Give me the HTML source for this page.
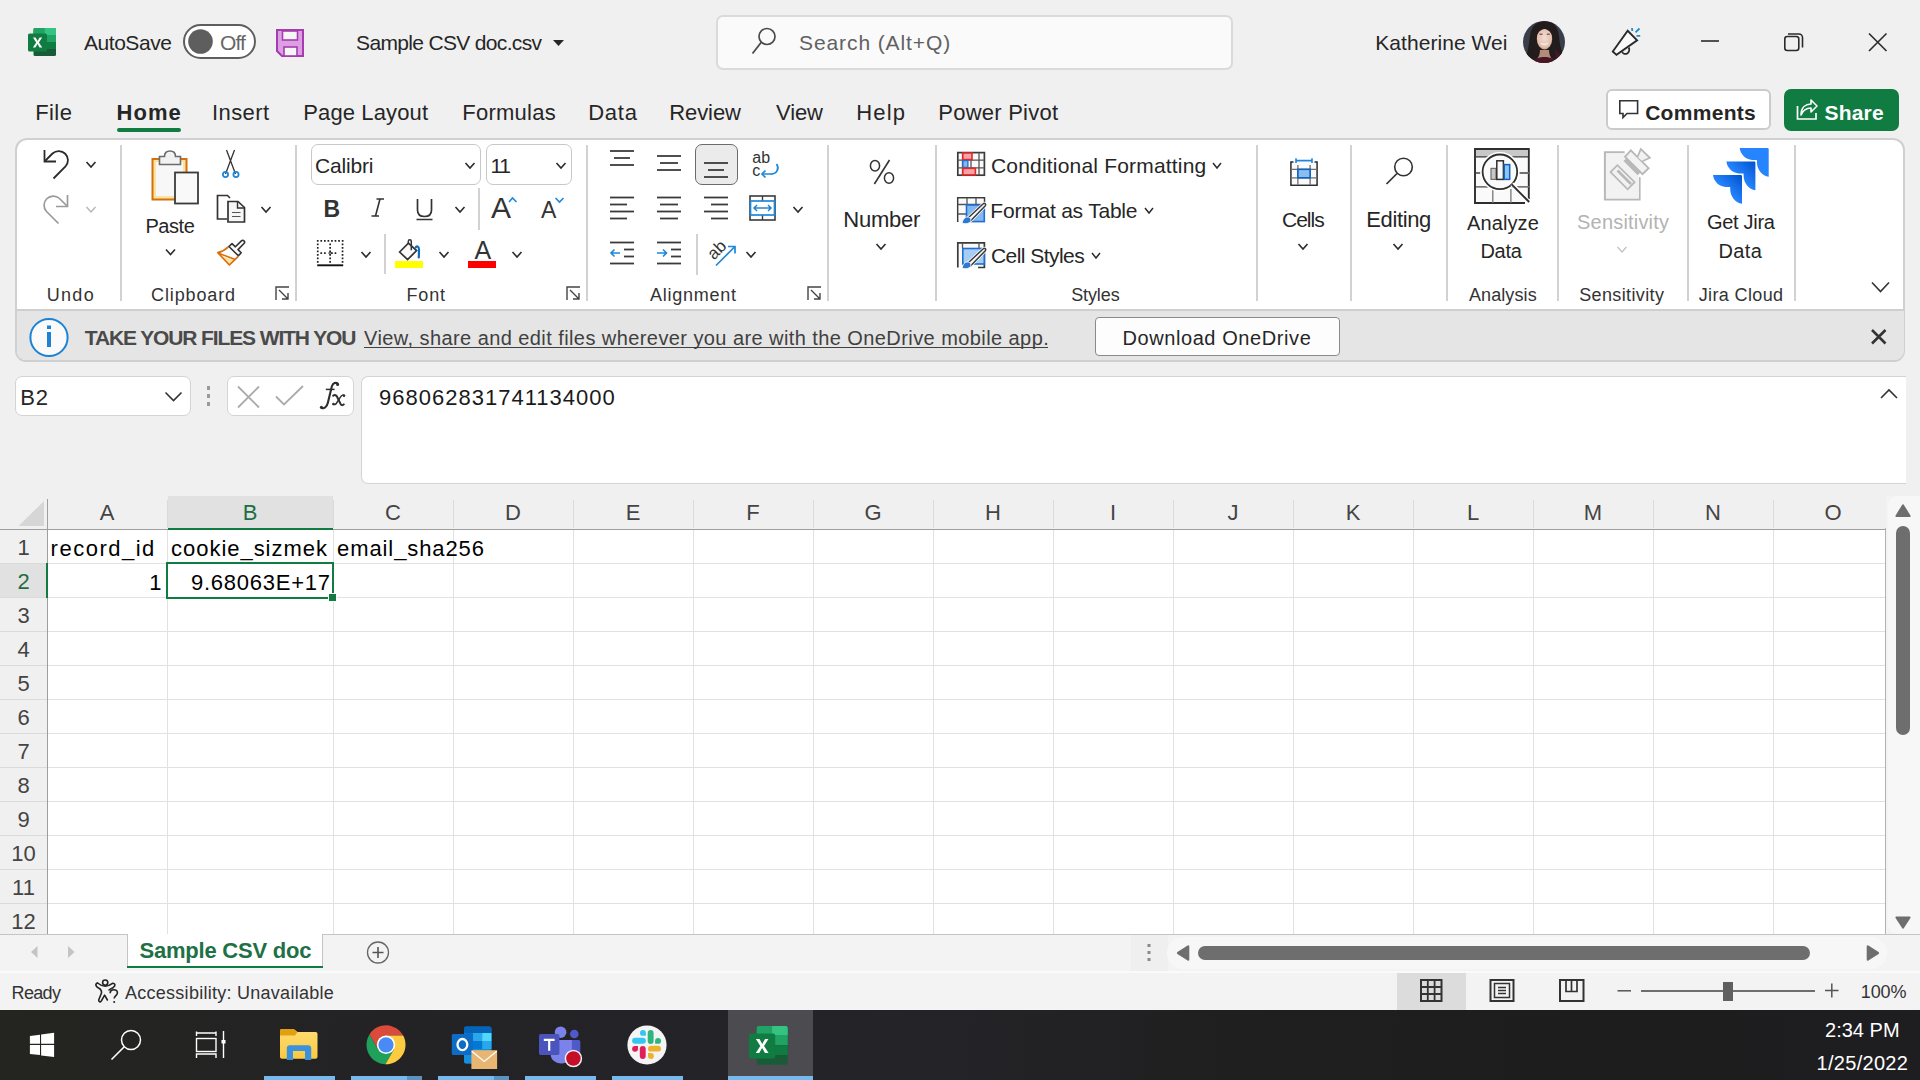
<!DOCTYPE html>
<html><head><meta charset="utf-8"><style>
html,body{margin:0;padding:0;width:1920px;height:1080px;overflow:hidden;background:#f0f0f0;font-family:"Liberation Sans",sans-serif;}
.r{position:absolute;}
.t{position:absolute;white-space:nowrap;line-height:1;}
svg.ov{position:absolute;left:0;top:0;}
</style></head><body>
<div class="r" style="left:15px;top:138px;width:1890px;height:224px;background:#fff;border:2px solid #d0d0d0;border-bottom:2px solid #cfcfcf;border-radius:12px 12px 11px 11px;box-sizing:border-box;"></div>
<div class="r" style="left:16.5px;top:309px;width:1887px;height:51px;background:#e5e5e5;border-top:2px solid #cfcfcf;border-radius:0 0 9px 9px;box-sizing:border-box;"></div>
<div class="r" style="left:15px;top:376px;width:176px;height:40px;background:#fff;border:1px solid #d4d4d4;border-radius:7px;box-sizing:border-box;"></div>
<div class="r" style="left:227px;top:376px;width:127px;height:40px;background:#fff;border:1px solid #d4d4d4;border-radius:7px;box-sizing:border-box;"></div>
<div class="r" style="left:361px;top:376px;width:1545px;height:108px;background:#fff;border:1px solid #d4d4d4;border-radius:7px 0 0 7px;border-right:none;box-sizing:border-box;"></div>
<div class="r" style="left:47px;top:529px;width:1838px;height:405px;background:#fff;"></div>
<div class="r" style="left:168px;top:496px;width:165px;height:33px;background:#e1e1e1;"></div>
<div class="r" style="left:0px;top:564px;width:47px;height:33px;background:#e1e1e1;"></div>
<div class="r" style="left:167px;top:529px;width:1px;height:405px;background:#e1e1e1;"></div>
<div class="r" style="left:333px;top:529px;width:1px;height:405px;background:#e1e1e1;"></div>
<div class="r" style="left:453px;top:529px;width:1px;height:405px;background:#e1e1e1;"></div>
<div class="r" style="left:573px;top:529px;width:1px;height:405px;background:#e1e1e1;"></div>
<div class="r" style="left:693px;top:529px;width:1px;height:405px;background:#e1e1e1;"></div>
<div class="r" style="left:813px;top:529px;width:1px;height:405px;background:#e1e1e1;"></div>
<div class="r" style="left:933px;top:529px;width:1px;height:405px;background:#e1e1e1;"></div>
<div class="r" style="left:1053px;top:529px;width:1px;height:405px;background:#e1e1e1;"></div>
<div class="r" style="left:1173px;top:529px;width:1px;height:405px;background:#e1e1e1;"></div>
<div class="r" style="left:1293px;top:529px;width:1px;height:405px;background:#e1e1e1;"></div>
<div class="r" style="left:1413px;top:529px;width:1px;height:405px;background:#e1e1e1;"></div>
<div class="r" style="left:1533px;top:529px;width:1px;height:405px;background:#e1e1e1;"></div>
<div class="r" style="left:1653px;top:529px;width:1px;height:405px;background:#e1e1e1;"></div>
<div class="r" style="left:1773px;top:529px;width:1px;height:405px;background:#e1e1e1;"></div>
<div class="r" style="left:47px;top:563px;width:1838px;height:1px;background:#e1e1e1;"></div>
<div class="r" style="left:47px;top:597px;width:1838px;height:1px;background:#e1e1e1;"></div>
<div class="r" style="left:47px;top:631px;width:1838px;height:1px;background:#e1e1e1;"></div>
<div class="r" style="left:47px;top:665px;width:1838px;height:1px;background:#e1e1e1;"></div>
<div class="r" style="left:47px;top:699px;width:1838px;height:1px;background:#e1e1e1;"></div>
<div class="r" style="left:47px;top:733px;width:1838px;height:1px;background:#e1e1e1;"></div>
<div class="r" style="left:47px;top:767px;width:1838px;height:1px;background:#e1e1e1;"></div>
<div class="r" style="left:47px;top:801px;width:1838px;height:1px;background:#e1e1e1;"></div>
<div class="r" style="left:47px;top:835px;width:1838px;height:1px;background:#e1e1e1;"></div>
<div class="r" style="left:47px;top:869px;width:1838px;height:1px;background:#e1e1e1;"></div>
<div class="r" style="left:47px;top:903px;width:1838px;height:1px;background:#e1e1e1;"></div>
<div class="r" style="left:47px;top:937px;width:1838px;height:1px;background:#e1e1e1;"></div>
<div class="r" style="left:167px;top:500px;width:1px;height:28px;background:#dadada;"></div>
<div class="r" style="left:333px;top:500px;width:1px;height:28px;background:#dadada;"></div>
<div class="r" style="left:453px;top:500px;width:1px;height:28px;background:#dadada;"></div>
<div class="r" style="left:573px;top:500px;width:1px;height:28px;background:#dadada;"></div>
<div class="r" style="left:693px;top:500px;width:1px;height:28px;background:#dadada;"></div>
<div class="r" style="left:813px;top:500px;width:1px;height:28px;background:#dadada;"></div>
<div class="r" style="left:933px;top:500px;width:1px;height:28px;background:#dadada;"></div>
<div class="r" style="left:1053px;top:500px;width:1px;height:28px;background:#dadada;"></div>
<div class="r" style="left:1173px;top:500px;width:1px;height:28px;background:#dadada;"></div>
<div class="r" style="left:1293px;top:500px;width:1px;height:28px;background:#dadada;"></div>
<div class="r" style="left:1413px;top:500px;width:1px;height:28px;background:#dadada;"></div>
<div class="r" style="left:1533px;top:500px;width:1px;height:28px;background:#dadada;"></div>
<div class="r" style="left:1653px;top:500px;width:1px;height:28px;background:#dadada;"></div>
<div class="r" style="left:1773px;top:500px;width:1px;height:28px;background:#dadada;"></div>
<div class="r" style="left:0px;top:563px;width:47px;height:1px;background:#dadada;"></div>
<div class="r" style="left:0px;top:597px;width:47px;height:1px;background:#dadada;"></div>
<div class="r" style="left:0px;top:631px;width:47px;height:1px;background:#dadada;"></div>
<div class="r" style="left:0px;top:665px;width:47px;height:1px;background:#dadada;"></div>
<div class="r" style="left:0px;top:699px;width:47px;height:1px;background:#dadada;"></div>
<div class="r" style="left:0px;top:733px;width:47px;height:1px;background:#dadada;"></div>
<div class="r" style="left:0px;top:767px;width:47px;height:1px;background:#dadada;"></div>
<div class="r" style="left:0px;top:801px;width:47px;height:1px;background:#dadada;"></div>
<div class="r" style="left:0px;top:835px;width:47px;height:1px;background:#dadada;"></div>
<div class="r" style="left:0px;top:869px;width:47px;height:1px;background:#dadada;"></div>
<div class="r" style="left:0px;top:903px;width:47px;height:1px;background:#dadada;"></div>
<div class="r" style="left:0px;top:937px;width:47px;height:1px;background:#dadada;"></div>
<div class="r" style="left:0px;top:529px;width:1886px;height:1px;background:#9e9e9e;"></div>
<div class="r" style="left:47px;top:499px;width:1px;height:435px;background:#9e9e9e;"></div>
<div class="r" style="left:1885px;top:528px;width:1px;height:406px;background:#b0b0b0;"></div>
<div class="r" style="left:0px;top:0px;width:0px;height:0px;"></div>
<div class="r" style="left:168px;top:528px;width:165px;height:2px;background:#107c41;"></div>
<div class="r" style="left:46px;top:563px;width:2px;height:35px;background:#107c41;"></div>
<div class="r" style="left:166px;top:562px;width:168px;height:37px;border:2px solid #107c41;box-sizing:border-box;"></div>
<div class="r" style="left:328px;top:593px;width:7px;height:7px;background:#107c41;border:1px solid #fff;"></div>
<div class="r" style="left:1886px;top:496px;width:34px;height:438px;background:#f3f3f3;"></div>
<div class="r" style="left:1888px;top:496px;width:32px;height:438px;background:#f7f7f7;border-radius:10px 0 0 10px;"></div>
<div class="r" style="left:1896px;top:526px;width:14px;height:209px;background:#6e6e6e;border-radius:7px;"></div>
<div class="r" style="left:0px;top:934px;width:1920px;height:1px;background:#c4c4c4;"></div>
<div class="r" style="left:0px;top:935px;width:1920px;height:36px;background:#f3f3f3;"></div>
<div class="r" style="left:1131px;top:935px;width:37px;height:36px;background:#efefef;"></div>
<div class="r" style="left:1167px;top:937px;width:720px;height:32px;background:#f7f7f7;border-radius:16px;"></div>
<div class="r" style="left:1198px;top:946px;width:612px;height:14px;background:#6e6e6e;border-radius:7px;"></div>
<div class="r" style="left:127px;top:934px;width:196px;height:33px;background:#ffffff;border-left:1px solid #c4c4c4;border-right:1px solid #c4c4c4;box-sizing:border-box;"></div>
<div class="r" style="left:127px;top:966px;width:196px;height:2px;background:#107c41;"></div>
<div class="r" style="left:0px;top:971px;width:1920px;height:2px;background:#fafafa;"></div>
<div class="r" style="left:0px;top:973px;width:1920px;height:37px;background:#f3f3f3;"></div>
<div class="r" style="left:1397px;top:973px;width:69px;height:37px;background:#dcdcdc;"></div>
<div class="r" style="left:0px;top:1010px;width:1920px;height:70px;background:linear-gradient(90deg,#242420 0px,#232326 400px,#242328 900px,#201f1f 1250px,#1d1d1d 1600px,#1e1d20 1920px);"></div>
<div class="r" style="left:728px;top:1010px;width:85px;height:70px;background:#4c4b4f;"></div>
<div class="r" style="left:264px;top:1076px;width:71px;height:4px;background:#76b9ed;"></div>
<div class="r" style="left:351px;top:1076px;width:71px;height:4px;background:#76b9ed;"></div>
<div class="r" style="left:438px;top:1076px;width:71px;height:4px;background:#76b9ed;"></div>
<div class="r" style="left:525px;top:1076px;width:71px;height:4px;background:#76b9ed;"></div>
<div class="r" style="left:612px;top:1076px;width:71px;height:4px;background:#76b9ed;"></div>
<div class="r" style="left:728px;top:1076px;width:85px;height:4px;background:#76b9ed;"></div>
<div class="r" style="left:407px;top:1076px;width:15px;height:4px;background:#5b93c0;"></div>
<div class="r" style="left:494px;top:1076px;width:15px;height:4px;background:#5b93c0;"></div>
<div class="r" style="left:716px;top:15px;width:517px;height:55px;background:#fafafa;border:2px solid #dadada;border-radius:7px;box-sizing:border-box;"></div>
<div class="r" style="left:117px;top:128px;width:64px;height:4px;background:#107c41;border-radius:2px;"></div>
<div class="r" style="left:1606px;top:89px;width:165px;height:41px;background:#fff;border:2px solid #cbcbcb;border-radius:6px;box-sizing:border-box;"></div>
<div class="r" style="left:1784px;top:89px;width:115px;height:42px;background:#107c41;border-radius:7px;"></div>
<div class="r" style="left:120px;top:145px;width:1.6px;height:156px;background:#d2d2d2;"></div>
<div class="r" style="left:295px;top:145px;width:1.6px;height:156px;background:#d2d2d2;"></div>
<div class="r" style="left:586px;top:145px;width:1.6px;height:156px;background:#d2d2d2;"></div>
<div class="r" style="left:827px;top:145px;width:1.6px;height:156px;background:#d2d2d2;"></div>
<div class="r" style="left:935px;top:145px;width:1.6px;height:156px;background:#d2d2d2;"></div>
<div class="r" style="left:1256px;top:145px;width:1.6px;height:156px;background:#d2d2d2;"></div>
<div class="r" style="left:1350px;top:145px;width:1.6px;height:156px;background:#d2d2d2;"></div>
<div class="r" style="left:1446px;top:145px;width:1.6px;height:156px;background:#d2d2d2;"></div>
<div class="r" style="left:1557px;top:145px;width:1.6px;height:156px;background:#d2d2d2;"></div>
<div class="r" style="left:1687px;top:145px;width:1.6px;height:156px;background:#d2d2d2;"></div>
<div class="r" style="left:1794px;top:145px;width:1.6px;height:156px;background:#d2d2d2;"></div>
<div class="r" style="left:478px;top:188px;width:1.6px;height:42px;background:#d2d2d2;"></div>
<div class="r" style="left:384px;top:234px;width:1.6px;height:40px;background:#d2d2d2;"></div>
<div class="r" style="left:696px;top:234px;width:1.6px;height:41px;background:#d2d2d2;"></div>
<div class="r" style="left:311px;top:144px;width:170px;height:41px;border:1.8px solid #c8c8c8;border-radius:7px;box-sizing:border-box;background:#fff;"></div>
<div class="r" style="left:486px;top:144px;width:86px;height:41px;border:1.8px solid #c8c8c8;border-radius:7px;box-sizing:border-box;background:#fff;"></div>
<div class="r" style="left:395px;top:261px;width:28px;height:7px;background:#ffff00;"></div>
<div class="r" style="left:468px;top:261px;width:28px;height:7px;background:#ff0000;"></div>
<div class="r" style="left:695px;top:143.5px;width:43px;height:41px;background:#ebebeb;border:1.8px solid #6b6b6b;border-radius:7px;box-sizing:border-box;"></div>
<div class="r" style="left:364px;top:346.5px;width:684px;height:1.3px;background:#404040;"></div>
<div class="r" style="left:1095px;top:317px;width:245px;height:39px;background:#fdfdfd;border:1.5px solid #8a8a8a;border-radius:4px;box-sizing:border-box;"></div>
<div class="r" style="left:206.5px;top:386.2px;width:3.5px;height:3.5px;background:#9a9a9a;"></div>
<div class="r" style="left:206.5px;top:394.2px;width:3.5px;height:3.5px;background:#9a9a9a;"></div>
<div class="r" style="left:206.5px;top:402.2px;width:3.5px;height:3.5px;background:#9a9a9a;"></div>
<div class="r" style="left:1641px;top:990px;width:174px;height:2px;background:#6e6e6e;"></div>
<div class="r" style="left:1723px;top:982px;width:10px;height:19px;background:#5f5f5f;"></div>
<svg class="ov" width="1920" height="1080" viewBox="0 0 1920 1080">
<g transform="translate(28,28) scale(1.0)"><rect x="5.5" y="0" width="22.5" height="28" rx="1.5" fill="#185c37"/><path d="M7 0 H26.5 A1.5 1.5 0 0 1 28 1.5 V7 H5.5 V1.5 A1.5 1.5 0 0 1 7 0Z" fill="#21a366"/><path d="M16.75 0 H26.5 A1.5 1.5 0 0 1 28 1.5 V7 H16.75Z" fill="#33c481"/><rect x="5.5" y="7" width="22.5" height="7" fill="#107c41"/><rect x="16.75" y="7" width="11.25" height="7" fill="#21a366"/><rect x="5.5" y="14" width="22.5" height="7" fill="#185c37"/><rect x="16.75" y="14" width="11.25" height="7" fill="#107c41"/><rect x="0" y="5.5" width="19" height="18" rx="1.6" fill="#107c41"/><path d="M5 9.5 L7.6 9.5 L9.6 13 L11.6 9.5 L14.1 9.5 L10.9 14.5 L14.2 19.6 L11.6 19.6 L9.5 15.9 L7.4 19.6 L4.9 19.6 L8.2 14.5Z" fill="#fff"/></g>
<rect x="184" y="25" width="71" height="33" rx="16.5" fill="#fff" stroke="#5e5e5e" stroke-width="2"/>
<circle cx="200.5" cy="41.5" r="12.3" fill="#5e5e5e"/>
<path d="M277 30 H303 V56 H282 L277 51Z" fill="#dd9fe3" stroke="#a63cb0" stroke-width="2" stroke-linejoin="miter"/>
<rect x="282.5" y="31" width="15" height="9" fill="#f5f5f5" stroke="#a63cb0" stroke-width="1.6"/>
<rect x="284" y="47" width="13" height="9" fill="#f5f5f5" stroke="#a63cb0" stroke-width="1.6"/>
<path d="M553 40 H564 L558.5 46Z" fill="#262626"/>
<circle cx="767" cy="36.5" r="8" fill="none" stroke="#4a4a4a" stroke-width="1.7"/>
<path d="M761.5 42 L752.5 53.5" stroke="#4a4a4a" stroke-width="1.8" fill="none"/>
<defs><clipPath id="av"><circle cx="1544" cy="42" r="21"/></clipPath><radialGradient id="face" cx="0.5" cy="0.45" r="0.6"><stop offset="0" stop-color="#f2dcd2"/><stop offset="0.75" stop-color="#e4c0ae"/><stop offset="1" stop-color="#b88a76"/></radialGradient><filter id="avb" x="-10%" y="-10%" width="120%" height="120%"><feGaussianBlur stdDeviation="0.6"/></filter></defs>
<g clip-path="url(#av)"><rect x="1522" y="20" width="44" height="44" fill="#3a3e4b"/><g filter="url(#avb)"><path d="M1524 64 C1527 55 1529 45 1530 36 C1531 26 1537 21 1545 21 C1553 21 1558 26 1559 36 C1560 45 1561 52 1566 58 V64Z" fill="#241d1d"/><path d="M1540 50 C1540 54 1539 57 1536 60 H1553 C1550 57 1549 54 1549 50Z" fill="#b58a78"/><path d="M1530 64 C1533 59 1538 57 1544.5 57 C1551 57 1556 59 1559 64Z" fill="#4a1628"/><path d="M1555 50 C1559 52 1562 56 1563 60 L1566 64 H1556Z" fill="#4a1628"/><ellipse cx="1544.5" cy="38.8" rx="7.7" ry="10.6" fill="url(#face)"/><path d="M1535.5 38 C1536 30 1540 26.5 1544.5 26.5 C1549 26.5 1553 30 1553.5 38 C1552 33 1548.5 29.5 1544.5 29 C1540.5 29.5 1537 33 1535.5 38Z" fill="#241d1d"/><path d="M1539.5 34.2 H1542.5 M1546.8 34.2 H1549.8" stroke="#4a3430" stroke-width="1"/><path d="M1541 43.2 Q1544.5 45.8 1548 43.2" stroke="#f4eeee" stroke-width="1.4" fill="none"/></g></g>
<path d="M1612.8 51.5 L1627.7 30.8 L1637.1 40.3 L1616.5 54.9Z" fill="#fafafa" stroke="#2a2a2a" stroke-width="1.9" stroke-linejoin="miter"/>
<path d="M1622.2 51.5 C1622.5 54 1625 54.2 1626.5 53.8 C1629 53 1630 50 1628.8 47.5" fill="none" stroke="#2a2a2a" stroke-width="1.8"/>
<path d="M1632 28 L1632.3 31 M1635.5 32.3 L1639.5 28.5 M1636.5 35.8 L1640.2 35.8" stroke="#1f8ad2" stroke-width="1.8" fill="none"/>
<path d="M1701 41 H1719" stroke="#2a2a2a" stroke-width="1.6"/>
<rect x="1784.8" y="36.5" width="14" height="14" rx="2.5" fill="none" stroke="#2a2a2a" stroke-width="1.6"/>
<path d="M1788 34 H1799 A3.5 3.5 0 0 1 1802.5 37.5 V47.5" fill="none" stroke="#2a2a2a" stroke-width="1.6"/>
<path d="M1869 33.5 L1886.5 51 M1886.5 33.5 L1869 51" stroke="#2a2a2a" stroke-width="1.6"/>
<path d="M1619.8 100.8 H1637.6 V113.5 H1627 L1623 117.6 V113.5 H1619.8Z" fill="none" stroke="#333" stroke-width="1.6" stroke-linejoin="miter"/>
<path d="M1797.5 106 V119 H1816 V113" fill="none" stroke="#fff" stroke-width="1.7"/>
<path d="M1801 115 C1801 107 1806 104 1811 104 V100 L1817 106 L1811 112 V108 C1807 108 1803 110 1801 115Z" fill="none" stroke="#fff" stroke-width="1.6" stroke-linejoin="round"/>
<path d="M276 300 V287 H289" fill="none" stroke="#444" stroke-width="1.4"/><path d="M279 290 L288 299 M288 293 V299 H282" fill="none" stroke="#444" stroke-width="1.4"/>
<path d="M567 300 V287 H580" fill="none" stroke="#444" stroke-width="1.4"/><path d="M570 290 L579 299 M579 293 V299 H573" fill="none" stroke="#444" stroke-width="1.4"/>
<path d="M808 300 V287 H821" fill="none" stroke="#444" stroke-width="1.4"/><path d="M811 290 L820 299 M820 293 V299 H814" fill="none" stroke="#444" stroke-width="1.4"/>
<path d="M44.5 150 V161.5 H56" fill="none" stroke="#2b2b2b" stroke-width="1.8"/>
<path d="M45 161 L52.5 153.5 A9.2 9.2 0 0 1 65.5 166.5 L53.5 178.5" fill="none" stroke="#2b2b2b" stroke-width="1.8"/>
<path d="M86.5 162.0 L91 167.0 L95.5 162.0" fill="none" stroke="#2b2b2b" stroke-width="1.6"/>
<path d="M67.5 195 V206.5 H56" fill="none" stroke="#9a9a9a" stroke-width="1.7"/>
<path d="M67 206 L59.5 198.5 A9.2 9.2 0 0 0 46.5 211.5 L58.5 223.5" fill="none" stroke="#9a9a9a" stroke-width="1.7"/>
<path d="M86.5 207.0 L91 212.0 L95.5 207.0" fill="none" stroke="#b5b5b5" stroke-width="1.4"/>
<rect x="152.5" y="159" width="34" height="40.5" fill="#fbe3a0" stroke="#d86f0d" stroke-width="2"/>
<rect x="156" y="162" width="27" height="34" fill="#f7f7f7"/>
<path d="M159.5 164.5 V156.5 H164.5 C164.5 152.5 166.5 151 170 151 C173.5 151 175.5 152.5 175.5 156.5 H180.5 V164.5Z" fill="#f2f2f2" stroke="#6b6b6b" stroke-width="1.6"/>
<rect x="175" y="172.5" width="23" height="31" fill="#f9f9f9" stroke="#3b3b3b" stroke-width="1.8"/>
<path d="M166.0 249.5 L170.5 254.5 L175.0 249.5" fill="none" stroke="#2b2b2b" stroke-width="1.6"/>
<path d="M226.5 150 L235.5 174 M234.5 150 L225.5 174" stroke="#333" stroke-width="1.3" fill="none"/>
<circle cx="225.5" cy="174.5" r="2.6" fill="none" stroke="#1f87d8" stroke-width="1.8"/><circle cx="236" cy="174.5" r="2.6" fill="none" stroke="#1f87d8" stroke-width="1.8"/>
<path d="M227 219 H217.5 V195.5 H227.5 L230 198" fill="none" stroke="#333" stroke-width="1.7"/>
<path d="M228 201.5 H238 L244.5 207.5 V222 H228Z" fill="#f7f7f7" stroke="#333" stroke-width="1.7"/>
<path d="M237.5 202 V208 H244" fill="none" stroke="#333" stroke-width="1.4"/><path d="M232 212.5 H240.5 M232 216.5 H240.5" stroke="#555" stroke-width="1.2"/>
<path d="M261.5 207.0 L266 212.0 L270.5 207.0" fill="none" stroke="#2b2b2b" stroke-width="1.6"/>
<path d="M222 256.5 L229.4 264.5 L235 259.8Z" fill="#fbe3a0"/>
<path d="M228.3 246.8 C225 250 221.5 251.8 217.8 252.6 L229.4 265 L238 256.6" fill="none" stroke="#d86f0d" stroke-width="1.7" stroke-linejoin="round"/>
<path d="M218.5 253.2 L235.3 259.6" stroke="#d86f0d" stroke-width="1.6"/>
<path d="M228.9 246.5 L232 243.6 L235.4 246.8 L241.4 240.9 C242.2 240.1 243.3 240.1 244 240.9 C244.8 241.7 244.8 242.7 244 243.5 L238 249.6 L241.2 252.8 L238.4 255.8Z" fill="#fafafa" stroke="#333" stroke-width="1.6" stroke-linejoin="round"/>
<path d="M465.5 163.0 L470 168.0 L474.5 163.0" fill="none" stroke="#2b2b2b" stroke-width="1.6"/>
<path d="M556.5 163.0 L561 168.0 L565.5 163.0" fill="none" stroke="#2b2b2b" stroke-width="1.6"/>
<path d="M376.5 199 H384 M371.5 216 H379 M380 199 L375.5 216" stroke="#333" stroke-width="1.6" fill="none"/>
<path d="M417.5 199 V210 C417.5 214.5 420 216.5 424.5 216.5 C429 216.5 431.5 214.5 431.5 210 V199 M416.5 219.5 H432.5" stroke="#333" stroke-width="1.7" fill="none"/>
<path d="M455.5 207.0 L460 212.0 L464.5 207.0" fill="none" stroke="#2b2b2b" stroke-width="1.6"/>
<path d="M509 202 L512.5 198 L516.5 202" stroke="#1f87d8" stroke-width="1.6" fill="none"/>
<path d="M555.5 198 L559.5 202 L563.5 198" stroke="#1f87d8" stroke-width="1.6" fill="none"/>
<path d="M316.9 240.0h1.7v1.7h-1.7zM320.4 240.0h1.7v1.7h-1.7zM324.0 240.0h1.7v1.7h-1.7zM327.5 240.0h1.7v1.7h-1.7zM331.1 240.0h1.7v1.7h-1.7zM334.6 240.0h1.7v1.7h-1.7zM338.2 240.0h1.7v1.7h-1.7zM341.8 240.0h1.7v1.7h-1.7zM316.9 243.5h1.7v1.7h-1.7zM341.7 243.5h1.7v1.7h-1.7zM316.9 247.0h1.7v1.7h-1.7zM341.7 247.0h1.7v1.7h-1.7zM316.9 250.6h1.7v1.7h-1.7zM341.7 250.6h1.7v1.7h-1.7zM316.9 254.1h1.7v1.7h-1.7zM341.7 254.1h1.7v1.7h-1.7zM316.9 257.6h1.7v1.7h-1.7zM341.7 257.6h1.7v1.7h-1.7zM316.9 261.1h1.7v1.7h-1.7zM341.7 261.1h1.7v1.7h-1.7zM329.3 243.5h1.7v1.7h-1.7zM329.3 247.0h1.7v1.7h-1.7zM329.3 250.6h1.7v1.7h-1.7zM329.3 254.1h1.7v1.7h-1.7zM329.3 257.6h1.7v1.7h-1.7zM329.3 261.1h1.7v1.7h-1.7zM320.4 252.3h1.7v1.7h-1.7zM324.0 252.3h1.7v1.7h-1.7zM331.1 252.3h1.7v1.7h-1.7zM334.6 252.3h1.7v1.7h-1.7z" fill="#222"/>
<circle cx="330.1" cy="253.1" r="1.2" fill="none" stroke="#222" stroke-width="0.9"/>
<path d="M317.2 265.3 H343.2" stroke="#111" stroke-width="1.9"/>
<path d="M361.5 252.0 L366 257.0 L370.5 252.0" fill="none" stroke="#2b2b2b" stroke-width="1.6"/>
<path d="M399.6 252 L408.4 243.2 L416.6 250.6 L407.6 259.6Z" fill="#fafafa" stroke="#333" stroke-width="1.7" stroke-linejoin="miter"/>
<path d="M411.3 250.2 V241.4 C411.3 239.2 408.3 239.2 408.3 241.4 V244" fill="none" stroke="#333" stroke-width="1.5"/>
<path d="M415.6 247.6 C416.4 245.6 419 246 419 249.5 L418.8 257.5" fill="none" stroke="#0f6cbd" stroke-width="2.2" stroke-linecap="round"/>
<path d="M439.5 252.0 L444 257.0 L448.5 252.0" fill="none" stroke="#2b2b2b" stroke-width="1.6"/>
<path d="M512.5 252.0 L517 257.0 L521.5 252.0" fill="none" stroke="#2b2b2b" stroke-width="1.6"/>
<path d="M610 151 H634" stroke="#3b3b3b" stroke-width="1.8"/>
<path d="M610 165 H634" stroke="#3b3b3b" stroke-width="1.8"/>
<path d="M614 158 H630" stroke="#3b3b3b" stroke-width="1.8"/>
<path d="M657 156 H681" stroke="#3b3b3b" stroke-width="1.8"/>
<path d="M657 170 H681" stroke="#3b3b3b" stroke-width="1.8"/>
<path d="M660 163 H678" stroke="#3b3b3b" stroke-width="1.8"/>
<path d="M704 163 H728" stroke="#3b3b3b" stroke-width="1.8"/>
<path d="M704 177 H728" stroke="#3b3b3b" stroke-width="1.8"/>
<path d="M708 170 H724" stroke="#3b3b3b" stroke-width="1.8"/>
<path d="M776.5 164 C779.5 168 777.5 174.5 770 174 L762 174" stroke="#1f87d8" stroke-width="1.7" fill="none"/><path d="M765.5 170.5 L762 174 L765.5 177.5" stroke="#1f87d8" stroke-width="1.7" fill="none"/>
<path d="M610 197.5 H634" stroke="#3b3b3b" stroke-width="1.8"/>
<path d="M610 211.5 H634" stroke="#3b3b3b" stroke-width="1.8"/>
<path d="M610 204.5 H627" stroke="#3b3b3b" stroke-width="1.8"/>
<path d="M610 218.5 H627" stroke="#3b3b3b" stroke-width="1.8"/>
<path d="M657 197.5 H681" stroke="#3b3b3b" stroke-width="1.8"/>
<path d="M657 211.5 H681" stroke="#3b3b3b" stroke-width="1.8"/>
<path d="M660 204.5 H678" stroke="#3b3b3b" stroke-width="1.8"/>
<path d="M660 218.5 H678" stroke="#3b3b3b" stroke-width="1.8"/>
<path d="M704 197.5 H728" stroke="#3b3b3b" stroke-width="1.8"/>
<path d="M704 211.5 H728" stroke="#3b3b3b" stroke-width="1.8"/>
<path d="M711 204.5 H728" stroke="#3b3b3b" stroke-width="1.8"/>
<path d="M711 218.5 H728" stroke="#3b3b3b" stroke-width="1.8"/>
<rect x="750" y="196" width="25" height="24" fill="none" stroke="#3b3b3b" stroke-width="1.6"/><path d="M762.5 196 V220" stroke="#3b3b3b" stroke-width="1.4"/>
<rect x="750.5" y="201" width="24" height="14" fill="#fff" stroke="#1f87d8" stroke-width="1.7"/>
<path d="M754 208 H771 M757 205 L754 208 L757 211 M768 205 L771 208 L768 211" stroke="#1f87d8" stroke-width="1.5" fill="none"/>
<path d="M793.5 207.0 L798 212.0 L802.5 207.0" fill="none" stroke="#2b2b2b" stroke-width="1.6"/>
<path d="M610 242.5 H634" stroke="#3b3b3b" stroke-width="1.8"/>
<path d="M610 263.5 H634" stroke="#3b3b3b" stroke-width="1.8"/>
<path d="M624 249.5 H634" stroke="#3b3b3b" stroke-width="1.8"/>
<path d="M624 256.5 H634" stroke="#3b3b3b" stroke-width="1.8"/>
<path d="M620 253 H611 M614.5 249.5 L611 253 L614.5 256.5" stroke="#1f87d8" stroke-width="1.6" fill="none"/>
<path d="M657 242.5 H681" stroke="#3b3b3b" stroke-width="1.8"/>
<path d="M657 263.5 H681" stroke="#3b3b3b" stroke-width="1.8"/>
<path d="M671 249.5 H681" stroke="#3b3b3b" stroke-width="1.8"/>
<path d="M671 256.5 H681" stroke="#3b3b3b" stroke-width="1.8"/>
<path d="M657 253 H666.5 M663 249.5 L666.5 253 L663 256.5" stroke="#1f87d8" stroke-width="1.6" fill="none"/>
<text x="716.5" y="255.5" font-family="Liberation Sans" font-size="17" fill="#333" text-anchor="middle" transform="rotate(-45 716.5 249.5)">ab</text>
<path d="M716 265.5 L735 246.5 M728 246.5 H735 V253.5" stroke="#1f87d8" stroke-width="1.7" fill="none"/>
<path d="M746.5 252.0 L751 257.0 L755.5 252.0" fill="none" stroke="#2b2b2b" stroke-width="1.6"/>
<ellipse cx="875" cy="165.8" rx="4.6" ry="5.3" fill="none" stroke="#333" stroke-width="1.5"/><ellipse cx="889" cy="178" rx="4.6" ry="5.3" fill="none" stroke="#333" stroke-width="1.5"/><path d="M889.5 160 L874.4 184" stroke="#333" stroke-width="1.6"/>
<path d="M876.5 244.0 L881 249.0 L885.5 244.0" fill="none" stroke="#2b2b2b" stroke-width="1.6"/>
<rect x="957.8" y="152.6" width="26.6" height="22.6" fill="#fafafa" stroke="#3b3b3b" stroke-width="1.7"/>
<path d="M957.8 160.2 H984.4 M957.8 167.8 H984.4 M962.5 152.6 V175.2 M971 152.6 V175.2 M979 152.6 V175.2" stroke="#555" stroke-width="1.3"/>
<rect x="962.8" y="153" width="9.2" height="6.6" fill="#f7a1a8" stroke="#e02a2a" stroke-width="1.6"/>
<rect x="962.9" y="160.6" width="5" height="6.8" fill="#83b9f0" stroke="#1f6fd0" stroke-width="1.3"/>
<rect x="962.8" y="168.3" width="12.6" height="6.6" fill="#f7a1a8" stroke="#e02a2a" stroke-width="1.6"/>
<path d="M957.8 222 V197.8 H984.4 V204" fill="#fafafa" stroke="#3b3b3b" stroke-width="1.7"/>
<rect x="958.6" y="198.6" width="25" height="23" fill="#fafafa"/>
<path d="M957.8 204.5 H984.4 M957.8 214 H966 M967 197.8 V204.5 M976 197.8 V204.5" stroke="#555" stroke-width="1.3"/>
<rect x="966.5" y="205" width="17.8" height="16.6" fill="#83b9f0" stroke="#1f6fd0" stroke-width="1.6"/>
<path d="M967.5 218.5 L983 204.0 C984.5 202.5 986.5 204.0 985.3 205.7 L970.5 221.0Z" fill="#fafafa" stroke="#fff" stroke-width="3"/>
<path d="M967.5 218.5 L983 204.0 C984.5 202.5 986.5 204.0 985.3 205.7 L970.5 221.0Z" fill="#fafafa" stroke="#3b3b3b" stroke-width="1.5"/>
<path d="M962 223.0 C963.5 217.5 966.5 216.0 969.5 217.5 C971.5 219.0 971.5 221.0 969.5 222.5 C967.5 224.0 964.5 224.0 962 223.0Z" fill="#2f78d0" stroke="#fff" stroke-width="0.8"/>
<path d="M957.8 267.5 V242.8 H984.4 V267.5 H978" fill="#fafafa" stroke="#3b3b3b" stroke-width="1.7"/>
<path d="M962.5 242.8 V248 M979 242.8 V248" stroke="#555" stroke-width="1.3"/>
<rect x="962.8" y="248.5" width="21.5" height="15.5" fill="#a6cdf4" stroke="#1f6fd0" stroke-width="1.6"/>
<path d="M967.5 263.5 L983 249.0 C984.5 247.5 986.5 249.0 985.3 250.7 L970.5 266.0Z" fill="#fafafa" stroke="#fff" stroke-width="3"/>
<path d="M967.5 263.5 L983 249.0 C984.5 247.5 986.5 249.0 985.3 250.7 L970.5 266.0Z" fill="#fafafa" stroke="#3b3b3b" stroke-width="1.5"/>
<path d="M962 268.0 C963.5 262.5 966.5 261.0 969.5 262.5 C971.5 264.0 971.5 266.0 969.5 267.5 C967.5 269.0 964.5 269.0 962 268.0Z" fill="#2f78d0" stroke="#fff" stroke-width="0.8"/>
<path d="M1213.0 163.0 L1217 168.0 L1221.0 163.0" fill="none" stroke="#2b2b2b" stroke-width="1.5"/>
<path d="M1145.0 208.0 L1149 213.0 L1153.0 208.0" fill="none" stroke="#2b2b2b" stroke-width="1.5"/>
<path d="M1092.0 253.0 L1096 258.0 L1100.0 253.0" fill="none" stroke="#2b2b2b" stroke-width="1.5"/>
<path d="M1293.5 162 H1291 V185.2 H1317 V162 H1314.5" fill="#fafafa" stroke="#2e2e2e" stroke-width="1.7"/>
<rect x="1291.8" y="163" width="24.4" height="21.4" fill="#fafafa"/>
<path d="M1297.9 165 V185 M1310.1 165 V185 M1291 169.3 H1317 M1291 177.8 H1317" stroke="#6f6f6f" stroke-width="1.3"/>
<rect x="1297.9" y="169.3" width="12.2" height="8.5" fill="#8abef0" stroke="#0f62c0" stroke-width="1.6"/>
<path d="M1296 160.6 H1312 M1296 158.3 V163 M1312 158.3 V163" stroke="#1f87d8" stroke-width="1.6"/>
<path d="M1298.5 244.0 L1303 249.0 L1307.5 244.0" fill="none" stroke="#2b2b2b" stroke-width="1.6"/>
<circle cx="1403.5" cy="167" r="8.8" fill="none" stroke="#333" stroke-width="1.6"/><path d="M1397 173.5 L1386.5 184" stroke="#333" stroke-width="1.7"/>
<path d="M1393.5 244.0 L1398 249.0 L1402.5 244.0" fill="none" stroke="#2b2b2b" stroke-width="1.6"/>
<path d="M1528.8 199 V149 H1475 V203 H1525" fill="#fafafa" stroke="#2e2e2e" stroke-width="1.9"/>
<rect x="1476" y="150" width="52" height="6.2" fill="#c8c8c8"/>
<path d="M1476 156.8 H1529 M1476 173 H1529 M1476 186.7 H1529" stroke="#2e2e2e" stroke-width="1.3"/>
<path d="M1476 173 H1529 M1476 186.7 H1529" stroke="#777" stroke-width="1.4"/>
<path d="M1492.8 189 V203 M1510.9 189 V203" stroke="#777" stroke-width="1.3"/>
<circle cx="1499.9" cy="171.8" r="17.3" fill="#fafafa" stroke="#fff" stroke-width="5"/>
<circle cx="1499.9" cy="171.8" r="17.3" fill="#fafafa" stroke="#2e2e2e" stroke-width="1.8"/>
<path d="M1512 184 L1529 201.8" stroke="#fff" stroke-width="4"/><path d="M1511.6 184.4 L1529.2 202" stroke="#2e2e2e" stroke-width="2"/>
<rect x="1491" y="168.4" width="5" height="11" fill="#c8c8c8" stroke="#6f6f6f" stroke-width="1.2"/>
<rect x="1496.8" y="160.8" width="6.6" height="18.6" fill="#fafafa" stroke="#2e2e2e" stroke-width="1.5"/>
<rect x="1504.2" y="164.6" width="5.5" height="14.8" fill="#90c4f2" stroke="#0f62c0" stroke-width="1.5"/>
<path d="M1624.6 152.2 H1604.9 V199.5 H1639.6 V177.3" fill="#f2f2f2" stroke="#b8b8b8" stroke-width="2"/>
<path d="M1606 153.2 H1624 L1620 160 L1639 177 V198.5 H1606Z" fill="#f2f2f2"/>
<path d="M1610.5 172.1 L1617.4 165.2 L1634.6 182.2 L1627.6 189.3Z" fill="none" stroke="#b8b8b8" stroke-width="1.8"/>
<path d="M1617.5 170.5 L1631 184" stroke="#b8b8b8" stroke-width="2.6"/>
<path d="M1625 156.8 L1630.8 150.4 L1648.6 168.2 L1642.5 174.2Z" fill="#f2f2f2" stroke="#b8b8b8" stroke-width="1.9"/>
<path d="M1623.5 161 L1627 157.8 L1641 172 L1637.7 175.2Z" fill="#b8b8b8"/>
<path d="M1637.5 157 L1640.8 149 L1649.8 157.8 L1642.5 161.3" fill="#f2f2f2" stroke="#b8b8b8" stroke-width="1.8"/>
<path d="M1617.5 247.0 L1622 252.0 L1626.5 247.0" fill="none" stroke="#c4c4c4" stroke-width="1.4"/>
<defs><linearGradient id="jg1" x1="1" y1="0" x2="0.45" y2="0.55"><stop offset="0" stop-color="#0052cc"/><stop offset="1" stop-color="#2684ff"/></linearGradient></defs>
<path d="M1739.7 148.1 H1767.5 Q1768.7 148.1 1768.7 149.29999999999998 V176.7 C1762.2 175.7 1756.9 169.7 1756.9 161.9 V159.9 H1752.2 C1745.7 159.9 1740.3 154.1 1739.7 148.1Z" fill="#2684ff"/>
<path d="M1726.4 161.6 H1754.2 Q1755.4 161.6 1755.4 162.79999999999998 V190.2 C1748.9 189.2 1743.6 183.2 1743.6 175.4 V173.4 H1738.9 C1732.4 173.4 1727.0 167.6 1726.4 161.6Z" fill="url(#jg1)"/>
<path d="M1713 175.1 H1740.8 Q1742 175.1 1742 176.29999999999998 V203.7 C1735.5 202.7 1730.2 196.7 1730.2 188.9 V186.9 H1725.5 C1719.0 186.9 1713.6 181.1 1713 175.1Z" fill="url(#jg1)"/>
<path d="M1872.0 282.5 L1880.5 291.5 L1889.0 282.5" fill="none" stroke="#333" stroke-width="1.6"/>
<circle cx="49" cy="337.5" r="18.6" fill="#fafafa" stroke="#1c83d4" stroke-width="2"/>
<rect x="47" y="325.5" width="4" height="3.5" fill="#1c83d4"/><rect x="47" y="332" width="4" height="15" fill="#1c83d4"/>
<path d="M1872 330 L1885.5 343.5 M1885.5 330 L1872 343.5" stroke="#333" stroke-width="2.6"/>
<path d="M165.5 392.5 L173.5 400.5 L181.5 392.5" fill="none" stroke="#333" stroke-width="1.6"/>
<path d="M238 386.5 L259 407.5 M259 386.5 L238 407.5" stroke="#ababab" stroke-width="1.8"/>
<path d="M276 396.5 L284 404.5 L303 386" stroke="#ababab" stroke-width="1.8" fill="none"/>
<path d="M337.8 383.6 C336 382.2 333 382.6 331.8 386.5 L327.8 403 C326.8 406.8 324.2 408.8 321.6 408" fill="none" stroke="#2e2e2e" stroke-width="2.1" stroke-linecap="round"/>
<circle cx="337.6" cy="384.6" r="1.5" fill="#2e2e2e"/><circle cx="321.4" cy="407.2" r="1.5" fill="#2e2e2e"/>
<path d="M325.8 389.4 H334.6" stroke="#2e2e2e" stroke-width="1.5"/>
<path d="M333.2 395.6 C334.8 394.6 336.4 395 337.2 397 L340.4 403.6 C341.2 405.4 342.6 405.6 343.8 404.4" fill="none" stroke="#2e2e2e" stroke-width="2" stroke-linecap="round"/>
<path d="M344.4 395.4 C343.2 394.6 341.8 395 340.6 396.8 L336.6 403 C335.6 404.6 334.2 405 333.2 404.2" fill="none" stroke="#2e2e2e" stroke-width="1.4" stroke-linecap="round"/>
<circle cx="344" cy="395.8" r="1.3" fill="#2e2e2e"/><circle cx="333.4" cy="404" r="1.3" fill="#2e2e2e"/>
<path d="M1881 398 L1889 390 L1897 398" fill="none" stroke="#333" stroke-width="1.6"/>
<path d="M44 501 V526 H18.5Z" fill="#d6d6d6"/>
<path d="M1896.5 516 L1903 505.5 L1909.5 516Z" fill="#6e6e6e" stroke="#6e6e6e" stroke-width="2.2" stroke-linejoin="round"/>
<path d="M1896.5 917.5 L1909.5 917.5 L1903 927.5Z" fill="#6e6e6e" stroke="#6e6e6e" stroke-width="2.2" stroke-linejoin="round"/>
<path d="M1188.2 946.3 V959.7 L1178 953Z" fill="#6e6e6e" stroke="#6e6e6e" stroke-width="2.2" stroke-linejoin="round"/>
<path d="M1867.8 946.3 V959.7 L1878 953Z" fill="#6e6e6e" stroke="#6e6e6e" stroke-width="2.2" stroke-linejoin="round"/>
<rect x="1147.5" y="944.0" width="3" height="3" fill="#8a8a8a"/>
<rect x="1147.5" y="951.0" width="3" height="3" fill="#8a8a8a"/>
<rect x="1147.5" y="958.0" width="3" height="3" fill="#8a8a8a"/>
<path d="M37.5 946 V958 L31 952Z" fill="#c4c4c4"/><path d="M68 946 V958 L74.5 952Z" fill="#c4c4c4"/>
<circle cx="378" cy="952.5" r="10.5" fill="none" stroke="#666" stroke-width="1.3"/><path d="M378 947 V958 M372.5 952.5 H383.5" stroke="#555" stroke-width="1.6"/>
<circle cx="105.2" cy="982.6" r="2.6" fill="none" stroke="#222" stroke-width="1.6"/>
<path d="M97.5 983 C95 983.8 95.5 986.5 98.5 988 C100.5 989 101.8 990.5 101.5 993 L98.8 999.8 C98.2 1001.8 100.6 1002.6 101.4 1000.8 L104.6 995.2 L107.4 1000" fill="none" stroke="#222" stroke-width="1.6" stroke-linejoin="round" stroke-linecap="round"/>
<path d="M97.5 983 C100 985 102.5 986.2 105.2 986.2 C108 986.2 110.5 985 113 983.2 C115.5 983.3 115.6 986 113.2 987.5 C111.5 988.5 110 989.2 109 990" fill="none" stroke="#222" stroke-width="1.6" stroke-linejoin="round" stroke-linecap="round"/>
<path d="M110.2 993.2 C110.2 990.8 112 989.8 113.8 989.8 C115.8 989.8 117.4 991 117.4 993 C117.4 995.5 114.2 995.8 114.2 998.5" fill="none" stroke="#222" stroke-width="1.6"/><circle cx="114.2" cy="1002" r="1" fill="#222"/>
<rect x="1421" y="980" width="20.5" height="21" fill="none" stroke="#333" stroke-width="2"/><path d="M1427.8 980 V1001 M1434.6 980 V1001 M1421 987 H1441.5 M1421 994 H1441.5" stroke="#333" stroke-width="1.8"/>
<rect x="1490.5" y="980" width="23" height="21" fill="none" stroke="#333" stroke-width="2"/><rect x="1494.5" y="983.5" width="15" height="14" fill="none" stroke="#333" stroke-width="1.5"/><path d="M1498 987.5 H1506 M1498 990.5 H1506 M1498 993.5 H1506" stroke="#333" stroke-width="1.3"/>
<rect x="1560" y="980" width="23.5" height="21" fill="none" stroke="#333" stroke-width="2"/><path d="M1566 980 V991.5 H1577 V980 M1571.5 980 V991.5" stroke="#333" stroke-width="1.7" fill="none"/>
<path d="M1617.5 990.8 H1631" stroke="#555" stroke-width="1.5"/>
<path d="M1825 990.5 H1838.5 M1831.8 983.5 V997.5" stroke="#555" stroke-width="1.5"/>
<path d="M29.9 1035.9 L40 1034.8 V1043.7 H29.9Z M41.1 1034.6 L54.1 1032.7 V1043.7 H41.1Z M29.9 1045 H40 V1055.1 L29.9 1054Z M41.1 1045 H54.1 V1057.1 L41.1 1055.4Z" fill="#fff"/>
<circle cx="131" cy="1040" r="9.5" fill="none" stroke="#fff" stroke-width="1.5"/><path d="M124 1047 L111.5 1059.5" stroke="#fff" stroke-width="1.6"/>
<path d="M196.5 1036 V1031.5 M216 1031.5 V1036 M196.5 1033 H216" stroke="#fff" stroke-width="1.4" fill="none"/>
<rect x="196.5" y="1038.5" width="19.5" height="13" fill="none" stroke="#fff" stroke-width="1.4"/>
<path d="M196.5 1058 V1054 H216 V1058 M223.5 1031 V1058" stroke="#fff" stroke-width="1.4" fill="none"/><rect x="221.5" y="1040" width="4" height="3.5" fill="#fff"/>
<defs><linearGradient id="fold" x1="0" y1="0" x2="0" y2="1"><stop offset="0" stop-color="#ffdc73"/><stop offset="1" stop-color="#f9c941"/></linearGradient></defs>
<path d="M280 1031 C280 1029.8 280.8 1029 282 1029 H293.5 L297.5 1032 H315.5 C316.7 1032 317.5 1032.8 317.5 1034 V1056.7 C317.5 1057.9 316.7 1058.7 315.5 1058.7 H282 C280.8 1058.7 280 1057.9 280 1056.7Z" fill="url(#fold)"/>
<path d="M280 1031 C280 1029.8 280.8 1029 282 1029 H293.5 L297.5 1032 L295 1035.5 H280Z" fill="#e0a010"/>
<path d="M286.8 1060.1 V1048 C286.8 1046.3 288 1045.2 289.7 1045.2 H308.3 C310 1045.2 311.2 1046.3 311.2 1048 V1060.1 H305 V1051 H293 V1060.1Z" fill="#3b91dc"/>
<path d="M386.00 1035.60 L403.19 1035.60 A19.5 19.5 0 0 0 369.44 1034.51 L378.03 1049.40 L386 1044.8Z" fill="#db4a3a"/>
<path d="M378.03 1049.40 L369.44 1034.51 A19.5 19.5 0 0 0 385.37 1064.29 L393.97 1049.40 L386 1044.8Z" fill="#1fa15a"/>
<path d="M393.97 1049.40 L385.37 1064.29 A19.5 19.5 0 0 0 403.19 1035.60 L386.00 1035.60 L386 1044.8Z" fill="#fdcb3f"/>
<circle cx="386" cy="1044.8" r="9.2" fill="#fff"/><circle cx="386" cy="1044.8" r="7.6" fill="#4a8af4"/>
<rect x="464" y="1026.5" width="27.5" height="37" rx="2.5" fill="#0a74d0"/>
<rect x="464" y="1026.5" width="27.5" height="6.5" rx="2" fill="#0364b8"/>
<rect x="473" y="1033" width="9.2" height="8" fill="#28a8ea"/><rect x="482.2" y="1033" width="9.3" height="8" fill="#50d9ff"/>
<rect x="473" y="1041" width="9.2" height="8" fill="#0078d4"/><rect x="482.2" y="1041" width="9.3" height="8" fill="#28a8ea"/>
<rect x="464" y="1049" width="27.5" height="14.5" rx="2" fill="#1490df"/>
<rect x="451.8" y="1034" width="21.2" height="21.1" rx="1.6" fill="#0f6cc4"/><ellipse cx="462.4" cy="1044.6" rx="4.9" ry="5.6" fill="none" stroke="#fff" stroke-width="2.3"/>
<rect x="471.4" y="1050.2" width="25.7" height="18.8" fill="#e9b572"/><path d="M471.8 1051.2 L484.2 1061.5 L496.7 1051.2" fill="none" stroke="#fff" stroke-width="1.3"/>
<circle cx="560.6" cy="1032.2" r="5.8" fill="#7b83eb"/><circle cx="574.3" cy="1034" r="4.3" fill="#5059c9"/>
<path d="M571 1040 H578.5 C579.6 1040 580.3 1040.8 580.3 1041.8 V1052 C580.3 1056 577.5 1059.5 573 1059.5 H571Z" fill="#5059c9"/>
<path d="M550.7 1040 H571.9 V1055 C571.9 1059.8 567.5 1063.4 561.3 1063.4 C555 1063.4 550.7 1059.3 550.7 1054.5Z" fill="#7b83eb"/>
<rect x="539" y="1034" width="20.4" height="21.1" rx="1.8" fill="#4b53bc"/><path d="M543.8 1039.8 H554.6 M549.2 1039.8 V1050.8" stroke="#fff" stroke-width="2.2"/>
<circle cx="573.4" cy="1058.5" r="8" fill="#c50f28" stroke="#f2f2f2" stroke-width="1.5"/>
<circle cx="647" cy="1045" r="19.6" fill="#f4f4f4"/>
<rect x="632.1" y="1037.8" width="13.8" height="5.9" rx="2.95" fill="#36c5f0"/>
<path d="M642.9 1029.9 H643.0 A2.9 2.9 0 0 1 645.9 1032.8000000000002 V1035.8 H642.9 A2.9 2.9 0 0 1 640 1032.8999999999999 V1032.8000000000002 A2.9 2.9 0 0 1 642.9 1029.9Z" fill="#36c5f0"/>
<rect x="647.7" y="1030.1" width="5.9" height="13.8" rx="2.95" fill="#2eb67d"/>
<path d="M658.0 1038 H658.1 A2.9 2.9 0 0 1 661 1040.9 V1040.8999999999999 A2.9 2.9 0 0 1 658.1 1043.8 H655.1 V1040.9 A2.9 2.9 0 0 1 658.0 1038Z" fill="#2eb67d"/>
<rect x="648" y="1045.7" width="13" height="5.9" rx="2.95" fill="#ecb22e"/>
<path d="M648 1053.1 H651.0 A2.9 2.9 0 0 1 653.9 1056.0 V1056.1 A2.9 2.9 0 0 1 651.0 1059 H650.9 A2.9 2.9 0 0 1 648 1056.1Z" fill="#ecb22e"/>
<rect x="639.8" y="1045.9" width="5.9" height="13.1" rx="2.95" fill="#e01e5a"/>
<path d="M635.0 1045.9 H638 V1048.8 A2.9 2.9 0 0 1 635.1 1051.7 H635.0 A2.9 2.9 0 0 1 632.1 1048.8 V1048.8000000000002 A2.9 2.9 0 0 1 635.0 1045.9Z" fill="#e01e5a"/>
<g transform="translate(749,1026) scale(1.38)"><rect x="5.5" y="0" width="22.5" height="28" rx="1.5" fill="#185c37"/><path d="M7 0 H26.5 A1.5 1.5 0 0 1 28 1.5 V7 H5.5 V1.5 A1.5 1.5 0 0 1 7 0Z" fill="#21a366"/><path d="M16.75 0 H26.5 A1.5 1.5 0 0 1 28 1.5 V7 H16.75Z" fill="#33c481"/><rect x="5.5" y="7" width="22.5" height="7" fill="#107c41"/><rect x="16.75" y="7" width="11.25" height="7" fill="#21a366"/><rect x="5.5" y="14" width="22.5" height="7" fill="#185c37"/><rect x="16.75" y="14" width="11.25" height="7" fill="#107c41"/><rect x="0" y="5.5" width="19" height="18" rx="1.6" fill="#107c41"/><path d="M5 9.5 L7.6 9.5 L9.6 13 L11.6 9.5 L14.1 9.5 L10.9 14.5 L14.2 19.6 L11.6 19.6 L9.5 15.9 L7.4 19.6 L4.9 19.6 L8.2 14.5Z" fill="#fff"/></g>
</svg>
<div class="t" style="left:84.00px;top:32.00px;font-size:21px;color:#262626;letter-spacing:-0.457px;">AutoSave</div>
<div class="t" style="left:220.06px;top:32.00px;font-size:21px;color:#666666;letter-spacing:-0.862px;">Off</div>
<div class="t" style="left:356.06px;top:32.00px;font-size:21px;color:#262626;letter-spacing:-0.665px;">Sample CSV doc.csv</div>
<div class="t" style="left:799.05px;top:32.00px;font-size:21px;color:#616161;letter-spacing:0.900px;">Search (Alt+Q)</div>
<div class="t" style="left:1375.32px;top:32.00px;font-size:21px;color:#262626;letter-spacing:0.048px;">Katherine Wei</div>
<div class="t" style="left:35.24px;top:102.00px;font-size:22px;color:#262626;letter-spacing:0.405px;">File</div>
<div class="t" style="left:116.57px;top:102.00px;font-size:22px;color:#262626;font-weight:bold;letter-spacing:0.997px;">Home</div>
<div class="t" style="left:212.02px;top:102.00px;font-size:22px;color:#262626;letter-spacing:0.404px;">Insert</div>
<div class="t" style="left:303.24px;top:102.00px;font-size:22px;color:#262626;letter-spacing:0.128px;">Page Layout</div>
<div class="t" style="left:462.24px;top:102.00px;font-size:22px;color:#262626;letter-spacing:0.264px;">Formulas</div>
<div class="t" style="left:588.24px;top:102.00px;font-size:22px;color:#262626;letter-spacing:0.735px;">Data</div>
<div class="t" style="left:669.24px;top:102.00px;font-size:22px;color:#262626;letter-spacing:-0.087px;">Review</div>
<div class="t" style="left:776.00px;top:102.00px;font-size:22px;color:#262626;letter-spacing:-0.116px;">View</div>
<div class="t" style="left:856.24px;top:102.00px;font-size:22px;color:#262626;letter-spacing:1.140px;">Help</div>
<div class="t" style="left:938.24px;top:102.00px;font-size:22px;color:#262626;letter-spacing:0.244px;">Power Pivot</div>
<div class="t" style="left:1645.16px;top:102.00px;font-size:21px;color:#262626;font-weight:bold;letter-spacing:0.297px;">Comments</div>
<div class="t" style="left:1824.47px;top:102.00px;font-size:21px;color:#ffffff;font-weight:bold;letter-spacing:0.203px;">Share</div>
<div class="t" style="left:46.65px;top:286.00px;font-size:18px;color:#333333;letter-spacing:1.353px;">Undo</div>
<div class="t" style="left:151.10px;top:286.00px;font-size:18px;color:#333333;letter-spacing:0.869px;">Clipboard</div>
<div class="t" style="left:406.56px;top:286.00px;font-size:18px;color:#333333;letter-spacing:0.824px;">Font</div>
<div class="t" style="left:650.00px;top:286.00px;font-size:18px;color:#333333;letter-spacing:0.751px;">Alignment</div>
<div class="t" style="left:1071.19px;top:286.00px;font-size:18px;color:#333333;letter-spacing:-0.115px;">Styles</div>
<div class="t" style="left:1469.00px;top:286.00px;font-size:18px;color:#333333;letter-spacing:0.086px;">Analysis</div>
<div class="t" style="left:1579.19px;top:286.00px;font-size:18px;color:#333333;letter-spacing:0.378px;">Sensitivity</div>
<div class="t" style="left:1698.73px;top:286.00px;font-size:18px;color:#333333;letter-spacing:0.371px;">Jira Cloud</div>
<div class="t" style="left:145.40px;top:216.00px;font-size:20px;color:#262626;letter-spacing:-0.430px;">Paste</div>
<div class="t" style="left:314.95px;top:155.00px;font-size:21px;color:#262626;letter-spacing:-0.176px;">Calibri</div>
<div class="t" style="left:490.43px;top:155.00px;font-size:21px;color:#262626;letter-spacing:-1.256px;">11</div>
<div class="t" style="left:323.50px;top:198.00px;font-size:23px;color:#333;font-weight:bold;">B</div>
<div class="t" style="left:491.00px;top:193.00px;font-size:30px;color:#333;">A</div>
<div class="t" style="left:541.00px;top:199.00px;font-size:23px;color:#333;">A</div>
<div class="t" style="left:474.50px;top:238.00px;font-size:25px;color:#333;">A</div>
<div class="t" style="left:752.36px;top:150.00px;font-size:16px;color:#333;">ab</div>
<div class="t" style="left:752.36px;top:163.00px;font-size:16px;color:#333;">c</div>
<div class="t" style="left:843.24px;top:209.00px;font-size:22px;color:#262626;letter-spacing:-0.240px;">Number</div>
<div class="t" style="left:990.95px;top:155.00px;font-size:21px;color:#262626;letter-spacing:0.193px;">Conditional Formatting</div>
<div class="t" style="left:990.32px;top:200.00px;font-size:21px;color:#262626;letter-spacing:-0.215px;">Format as Table</div>
<div class="t" style="left:990.95px;top:245.00px;font-size:21px;color:#262626;letter-spacing:-0.541px;">Cell Styles</div>
<div class="t" style="left:1281.95px;top:209.00px;font-size:21px;color:#262626;letter-spacing:-0.973px;">Cells</div>
<div class="t" style="left:1366.24px;top:209.00px;font-size:22px;color:#262626;letter-spacing:-0.360px;">Editing</div>
<div class="t" style="left:1467.00px;top:213.00px;font-size:20px;color:#262626;letter-spacing:0.112px;">Analyze</div>
<div class="t" style="left:1480.40px;top:241.00px;font-size:20px;color:#262626;letter-spacing:-0.241px;">Data</div>
<div class="t" style="left:1577.10px;top:212.00px;font-size:20px;color:#b3b3b3;letter-spacing:0.187px;">Sensitivity</div>
<div class="t" style="left:1707.00px;top:212.00px;font-size:20px;color:#262626;letter-spacing:-0.299px;">Get Jira</div>
<div class="t" style="left:1718.40px;top:241.00px;font-size:20px;color:#262626;letter-spacing:0.426px;">Data</div>
<div class="t" style="left:84.79px;top:327.00px;font-size:21px;color:#4a4a4a;font-weight:bold;letter-spacing:-1.125px;">TAKE YOUR FILES WITH YOU</div>
<div class="t" style="left:364.00px;top:328.00px;font-size:20px;color:#404040;letter-spacing:0.421px;">View, share and edit files wherever you are with the OneDrive mobile app.</div>
<div class="t" style="left:1122.40px;top:328.00px;font-size:20px;color:#262626;letter-spacing:0.591px;">Download OneDrive</div>
<div class="t" style="left:20.24px;top:387.00px;font-size:22px;color:#262626;letter-spacing:0.866px;">B2</div>
<div class="t" style="left:379.01px;top:387.00px;font-size:22px;color:#1a1a1a;letter-spacing:1.011px;">968062831741134000</div>
<div class="t" style="font-size:21px;color:#444444;left:77px;width:60px;text-align:center;top:502.10px;font-size:22px;">A</div>
<div class="t" style="font-size:21px;color:#1e6e42;left:220px;width:60px;text-align:center;top:502.10px;font-size:22px;">B</div>
<div class="t" style="font-size:21px;color:#444444;left:363px;width:60px;text-align:center;top:502.10px;font-size:22px;">C</div>
<div class="t" style="font-size:21px;color:#444444;left:483px;width:60px;text-align:center;top:502.10px;font-size:22px;">D</div>
<div class="t" style="font-size:21px;color:#444444;left:603px;width:60px;text-align:center;top:502.10px;font-size:22px;">E</div>
<div class="t" style="font-size:21px;color:#444444;left:723px;width:60px;text-align:center;top:502.10px;font-size:22px;">F</div>
<div class="t" style="font-size:21px;color:#444444;left:843px;width:60px;text-align:center;top:502.10px;font-size:22px;">G</div>
<div class="t" style="font-size:21px;color:#444444;left:963px;width:60px;text-align:center;top:502.10px;font-size:22px;">H</div>
<div class="t" style="font-size:21px;color:#444444;left:1083px;width:60px;text-align:center;top:502.10px;font-size:22px;">I</div>
<div class="t" style="font-size:21px;color:#444444;left:1203px;width:60px;text-align:center;top:502.10px;font-size:22px;">J</div>
<div class="t" style="font-size:21px;color:#444444;left:1323px;width:60px;text-align:center;top:502.10px;font-size:22px;">K</div>
<div class="t" style="font-size:21px;color:#444444;left:1443px;width:60px;text-align:center;top:502.10px;font-size:22px;">L</div>
<div class="t" style="font-size:21px;color:#444444;left:1563px;width:60px;text-align:center;top:502.10px;font-size:22px;">M</div>
<div class="t" style="font-size:21px;color:#444444;left:1683px;width:60px;text-align:center;top:502.10px;font-size:22px;">N</div>
<div class="t" style="font-size:21px;color:#444444;left:1803px;width:60px;text-align:center;top:502.10px;font-size:22px;">O</div>
<div class="t" style="font-size:21px;color:#444444;left:0px;width:47px;text-align:center;top:536.50px;font-size:22px;">1</div>
<div class="t" style="font-size:21px;color:#1e6e42;left:0px;width:47px;text-align:center;top:570.50px;font-size:22px;">2</div>
<div class="t" style="font-size:21px;color:#444444;left:0px;width:47px;text-align:center;top:604.50px;font-size:22px;">3</div>
<div class="t" style="font-size:21px;color:#444444;left:0px;width:47px;text-align:center;top:638.50px;font-size:22px;">4</div>
<div class="t" style="font-size:21px;color:#444444;left:0px;width:47px;text-align:center;top:672.50px;font-size:22px;">5</div>
<div class="t" style="font-size:21px;color:#444444;left:0px;width:47px;text-align:center;top:706.50px;font-size:22px;">6</div>
<div class="t" style="font-size:21px;color:#444444;left:0px;width:47px;text-align:center;top:740.50px;font-size:22px;">7</div>
<div class="t" style="font-size:21px;color:#444444;left:0px;width:47px;text-align:center;top:774.50px;font-size:22px;">8</div>
<div class="t" style="font-size:21px;color:#444444;left:0px;width:47px;text-align:center;top:808.50px;font-size:22px;">9</div>
<div class="t" style="font-size:21px;color:#444444;left:0px;width:47px;text-align:center;top:842.50px;font-size:22px;">10</div>
<div class="t" style="font-size:21px;color:#444444;left:0px;width:47px;text-align:center;top:876.50px;font-size:22px;">11</div>
<div class="t" style="font-size:21px;color:#444444;left:0px;width:47px;text-align:center;top:910.50px;font-size:22px;">12</div>
<div class="t" style="left:50.57px;top:538.00px;font-size:22px;color:#000;letter-spacing:1.507px;">record_id</div>
<div class="t" style="left:171.12px;top:538.00px;font-size:22px;color:#000;letter-spacing:0.958px;">cookie_sizmek</div>
<div class="t" style="left:337.12px;top:538.00px;font-size:22px;color:#000;letter-spacing:0.891px;">email_sha256</div>
<div class="t" style="left:149.35px;top:572.00px;font-size:22px;color:#000;">1</div>
<div class="t" style="left:191.01px;top:572.00px;font-size:22px;color:#000;letter-spacing:0.749px;">9.68063E+17</div>
<div class="t" style="left:139.45px;top:940.00px;font-size:22px;color:#1e7145;font-weight:bold;letter-spacing:-0.208px;">Sample CSV doc</div>
<div class="t" style="left:11.56px;top:984.00px;font-size:18px;color:#333;letter-spacing:-0.648px;">Ready</div>
<div class="t" style="left:125.00px;top:984.00px;font-size:18px;color:#333;letter-spacing:0.266px;">Accessibility: Unavailable</div>
<div class="t" style="left:1860.65px;top:983.00px;font-size:18px;color:#333;letter-spacing:-0.024px;">100%</div>
<div class="t" style="left:1825.00px;top:1020.00px;font-size:20px;color:#ffffff;letter-spacing:0.013px;">2:34 PM</div>
<div class="t" style="left:1816.50px;top:1053.00px;font-size:20px;color:#ffffff;letter-spacing:0.306px;">1/25/2022</div>
</body></html>
